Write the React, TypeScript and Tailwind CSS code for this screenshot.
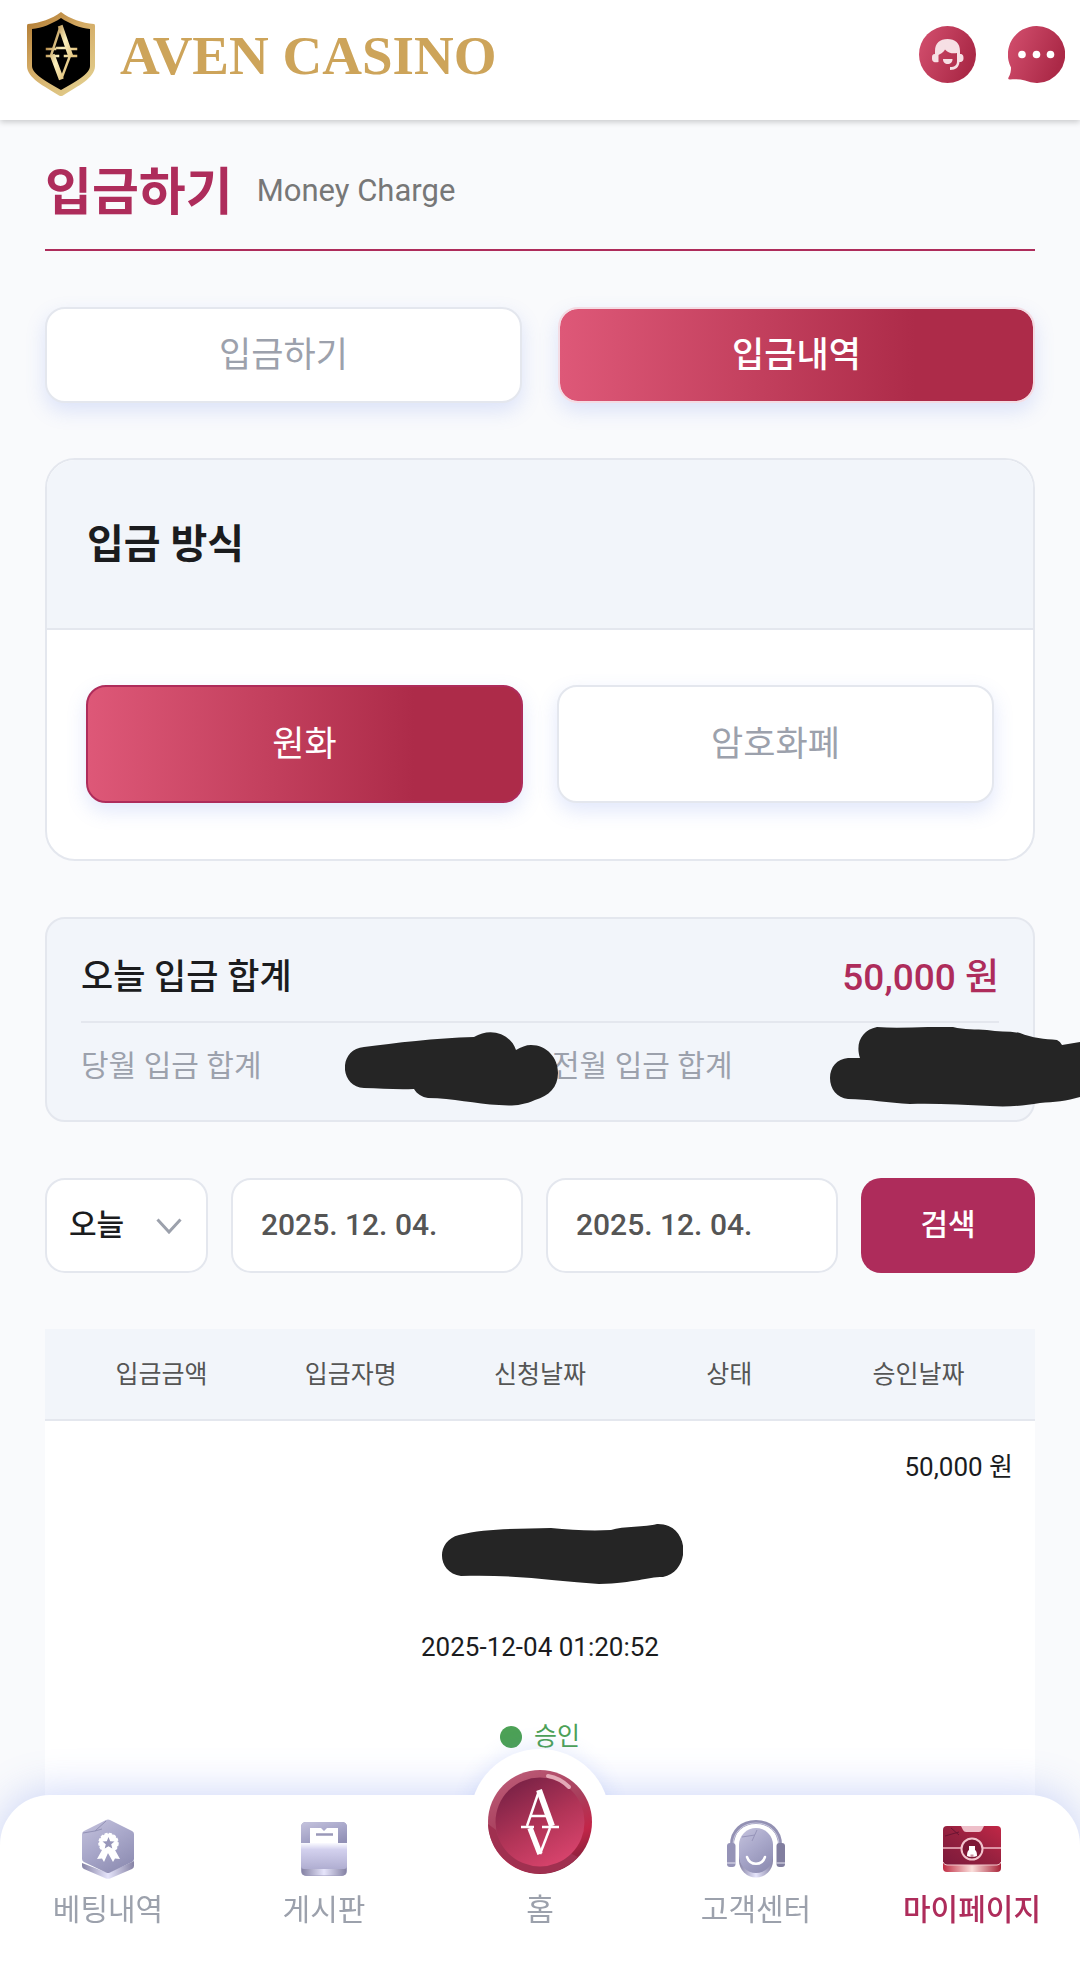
// Purpose: Deposit history page (mobile) with totals, date filter and bottom tab bar.
// Note: Amounts and the depositor name are blacked out with marker strokes.

import type { ReactNode } from 'react'

const historyColumns = ['입금금액', '입금자명', '신청날짜', '상태', '승인날짜']

function ShieldLogo() {
  return (
    <svg viewBox="0 0 70 86" className="h-[86px] w-[70px]" aria-hidden="true">
      <defs>
        <linearGradient id="gold" x1="0" y1="0" x2="0.7" y2="1">
          <stop offset="0" stopColor="#ad752c" />
          <stop offset="0.45" stopColor="#d2a862" />
          <stop offset="1" stopColor="#e2cd8c" />
        </linearGradient>
        <linearGradient id="letter" gradientUnits="userSpaceOnUse" x1="20" y1="30" x2="52" y2="44">
          <stop offset="0" stopColor="#a97a35" />
          <stop offset="0.5" stopColor="#fbf0bd" />
          <stop offset="1" stopColor="#dcb971" />
        </linearGradient>
      </defs>
      <path d="M35 1C44 8 56 12 68 13Q69 13 69 15V55C69 67 52 75 37 84.500Q35 85.500 33 84.500C18 75 1 67 1 55V15Q1 13 2 13C14 12 26 8 35 1Z" fill="url(#gold)" />
      <path d="M35 7C44 13 54 17 64 18V55C64 63 49 71 35 79C21 71 6 63 6 55V18C16 17 26 13 35 7Z" fill="#000" />
      <g stroke="url(#letter)" fill="none" strokeLinecap="square">
        <path d="M34 17L25.500 43" strokeWidth="2.500" />
        <path d="M35 17L44 43" strokeWidth="5" />
        <path d="M21 38H29M31 37H40M44 38H50M21 45H32M39 45H50" strokeWidth="2.500" />
        <path d="M27 46L34.500 66" strokeWidth="5" />
        <path d="M43.500 46L36 66" strokeWidth="2.500" />
      </g>
    </svg>
  )
}

function SupportIcon() {
  return (
    <svg viewBox="0 0 57 57" className="size-[57px]" aria-hidden="true">
      <defs>
        <linearGradient id="roundRed" x1="0" y1="0" x2="1" y2="0.4">
          <stop offset="0" stopColor="#d4506f" />
          <stop offset="1" stopColor="#ab2947" />
        </linearGradient>
      </defs>
      <circle cx="28.500" cy="28.500" r="28.500" fill="url(#roundRed)" />
      <path d="M16 28V25C16 17 21 13 28.500 13S41 17 41 25V28C44 28 44.500 30 44.500 32S44 36 40.500 36C40 41 37 44 31 44V41C36 41 38 39 38 35V27C34 28 29 27 26 23.500C24 27 21 28 19.500 29V36C14 37 13 35 13 32S13.500 28 16 28Z" fill="#f6dfe4" />
      <path d="M24 33H33.500C33.500 36.500 31.500 38 28.700 38S24 36.500 24 33Z" fill="#f6dfe4" />
    </svg>
  )
}

function ChatIcon() {
  return (
    <svg viewBox="0 0 57 57" className="size-[57px]" aria-hidden="true">
      <path d="M28.500 0A28.500 28.500 0 1 1 17 54.500C12 53 7 53 2 53.500Q-.5 53.500 .5 51.500C2.500 48 3 45 3 41.500A28.500 28.500 0 0 1 28.500 0Z" fill="url(#roundRed)" />
      <circle cx="14" cy="28.500" r="3.800" fill="#fff" />
      <circle cx="28.500" cy="28.500" r="3.800" fill="#fff" />
      <circle cx="42.500" cy="28.500" r="3.800" fill="#fff" />
    </svg>
  )
}

function BettingIcon() {
  return (
    <svg viewBox="0 0 52 60" className="h-[60px] w-[52px]" aria-hidden="true">
      <defs>
        <linearGradient id="lilac" x1="0" y1="0" x2="0.6" y2="1">
          <stop offset="0" stopColor="#c5c3dd" />
          <stop offset="0.5" stopColor="#aaa9cb" />
          <stop offset="1" stopColor="#9190b5" />
        </linearGradient>
        <linearGradient id="lilacRim">
          <stop offset="0" stopColor="#8683a5" />
          <stop offset="0.5" stopColor="#e6e5fb" />
          <stop offset="1" stopColor="#8683a5" />
        </linearGradient>
      </defs>
      <path d="M0 44V47Q0 49 2 50L24 59.500Q26 60 28 59.500L50 50Q52 49 52 47V42L26 54Z" fill="url(#lilacRim)" />
      <path d="M24 1Q26 0 28 1L50 12Q52 13 52 15V40Q52 42 50 43L28 53.500Q26 54.500 24 53.500L2 43Q0 42 0 40V15Q0 13 2 12Z" fill="url(#lilac)" />
      <path d="M1 14L13 12L24 2M13 12L20 10" stroke="#9291b5" strokeWidth="1" fill="none" />
      <path d="M20 31L15 40L20 39.500L22 43L26 34L31 43L33 39.500L38 40L33 31Z" fill="#fff" />
      <circle cx="26.500" cy="24" r="9.500" fill="#fff" stroke="#fff" strokeWidth="1.500" strokeDasharray="3 1.500" />
      <path d="M26.500 18L28.200 22.200L32.500 22.500L29.200 25.200L30.300 29.500L26.500 27.200L22.700 29.500L23.800 25.200L20.500 22.500L24.800 22.200Z" fill="#9796b9" />
    </svg>
  )
}

function BoardIcon() {
  return (
    <svg viewBox="0 0 46 54" className="h-[54px] w-[46px]" aria-hidden="true">
      <defs>
        <linearGradient id="folder" x1="0" y1="0" x2="0" y2="1">
          <stop offset="0" stopColor="#fafaff" />
          <stop offset="0.25" stopColor="#d3d1ee" />
          <stop offset="1" stopColor="#b0aed1" />
        </linearGradient>
      </defs>
      <rect width="46" height="54" rx="5" fill="#9c9abb" />
      <path d="M1 46H45V50Q45 53.500 41 53.500H5Q1 53.500 1 50Z" fill="url(#lilacRim)" />
      <path d="M0 5Q0 0 5 0H41Q46 0 46 5V24H0Z" fill="url(#lilac)" />
      <path d="M9 6H20L23 9L26 6H37V24H9Z" fill="#fff" />
      <path d="M15 12.500H32" stroke="#9a98b8" strokeWidth="2.500" />
      <path d="M0 21H46V44Q46 47 43 47H3Q0 47 0 44Z" fill="url(#folder)" />
    </svg>
  )
}

function CenterIcon() {
  return (
    <svg viewBox="0 0 58 58" className="size-[58px]" aria-hidden="true">
      <path d="M5 25C5 11 15 2 29 2S53 11 53 25" fill="none" stroke="#9391b3" strokeWidth="4" />
      <path d="M6 25C6 12 16 3 29 3S52 12 52 25" fill="none" stroke="#c9c8df" strokeWidth="1" />
      <rect x="12" y="12" width="34" height="45.500" rx="17" fill="url(#lilacRim)" />
      <rect x="12" y="8" width="34" height="45" rx="17" fill="url(#lilac)" />
      <path d="M15 17L28 15M25 21L30 10" stroke="#9795ba" strokeWidth="1" />
      <path d="M20 37C23 46 35 46 38 37" fill="none" stroke="#fff" strokeWidth="2.500" strokeLinecap="round" />
      <rect x="0" y="23" width="8.500" height="24" rx="3" fill="#9593b7" />
      <rect x="49.500" y="23" width="8.500" height="24" rx="3" fill="#817e9f" />
      <path d="M0 43H8.500M49.500 43H58" stroke="#e6e5f3" strokeWidth="1" />
    </svg>
  )
}

function MyPageIcon() {
  return (
    <svg viewBox="0 0 58 46" className="h-[46px] w-[58px]" aria-hidden="true">
      <defs>
        <linearGradient id="chest" x1="0" y1="1" x2="1" y2="0">
          <stop offset="0" stopColor="#7c1a3c" />
          <stop offset="0.5" stopColor="#96213f" />
          <stop offset="1" stopColor="#c12746" />
        </linearGradient>
        <linearGradient id="chestRim">
          <stop offset="0" stopColor="#c02c43" />
          <stop offset="0.5" stopColor="#fbe0dc" />
          <stop offset="1" stopColor="#a82036" />
        </linearGradient>
      </defs>
      <path d="M0 34H58V42Q58 46 54 46H4Q0 46 0 42Z" fill="url(#chestRim)" />
      <rect width="58" height="39" rx="4" fill="url(#chest)" />
      <path d="M0 36Q1 39 4 39H54Q57 39 58 36" fill="none" stroke="#f3c8cd" strokeWidth="1" />
      <path d="M18 0H41L39 4Q38 6 36 6H23Q21 6 20 4Z" fill="#eebfc9" />
      <path d="M2 10L16 6M8 2L16 9" stroke="#6b1533" strokeWidth="1" />
      <path d="M0 22H58" stroke="#f0b9c4" strokeWidth="1.500" />
      <circle cx="29" cy="23" r="10.500" fill="#7e1836" stroke="#f3c4cd" strokeWidth="2" />
      <path d="M26 20H32V24Q34 25 34 30Q29 32 24 30Q24 25 26 24Z" fill="#fff" />
      <path d="M27.500 31V28.500H30.500V31Z" fill="#c995a4" />
    </svg>
  )
}

function HomeCoin() {
  return (
    <svg viewBox="0 0 104 104" className="size-[104px]" aria-hidden="true">
      <defs>
        <linearGradient id="coinRim" x1="0.2" y1="0" x2="0.7" y2="1">
          <stop offset="0" stopColor="#bd5c78" />
          <stop offset="0.45" stopColor="#a8405d" />
          <stop offset="0.75" stopColor="#c22548" />
          <stop offset="1" stopColor="#7d2039" />
        </linearGradient>
        <linearGradient id="coinFace" x1="0.2" y1="0.1" x2="0.7" y2="1">
          <stop offset="0" stopColor="#7e2347" />
          <stop offset="0.5" stopColor="#b13457" />
          <stop offset="1" stopColor="#d9446d" />
        </linearGradient>
      </defs>
      <circle cx="52" cy="52" r="52" fill="url(#coinRim)" />
      <path d="M0 54A52 52 0 0 0 90 87L80 82A44 44 0 0 1 8 60Z" fill="#a03050" />
      <circle cx="52" cy="52" r="44.500" fill="url(#coinFace)" />
      <path d="M60 6Q72 8 81 17" stroke="#e4a9b7" strokeWidth="4" strokeLinecap="round" fill="none" />
      <g stroke="#fff" fill="none">
        <path d="M51 21L39 56" strokeWidth="2.500" />
        <path d="M51 20L64 56" strokeWidth="6" />
        <path d="M43 46H59M33 57H46M54 57H71" strokeWidth="2.500" />
        <path d="M42 58L52 84" strokeWidth="5.500" />
        <path d="M62 58L52 84" strokeWidth="2.500" />
      </g>
    </svg>
  )
}

const navItems = [
  { label: '베팅내역', icon: <BettingIcon /> },
  { label: '게시판', icon: <BoardIcon /> },
  { label: '홈', icon: <HomeCoin />, home: true },
  { label: '고객센터', icon: <CenterIcon /> },
  { label: '마이페이지', icon: <MyPageIcon />, active: true },
]

function TabButton({ active, className, children }: { active?: boolean; className: string; children: ReactNode }) {
  const look = active
    ? 'bg-linear-to-r from-[#de5878] to-[#ad2b49] to-75% text-white'
    : 'bg-white text-[#9ca1ac]'
  return (
    <button type="button" className={`flex-1 rounded-[20px] border-2 pt-0.5 text-[35px] leading-[48px] shadow-[0_8px_20px_rgba(88,120,235,0.18)] ${look} ${className}`}>
      {children}
    </button>
  )
}

function DateField({ label }: { label: string }) {
  return (
    <input
      type="text"
      aria-label={label}
      defaultValue="2025. 12. 04."
      className="h-[95px] min-w-0 flex-1 rounded-[20px] border-2 border-[#e4e7ee] bg-white px-7 pb-0.5 text-[30px] font-medium text-[#555]"
    />
  )
}

export default function App() {
  return (
    <div className="flex min-h-screen flex-col overflow-x-hidden bg-[#f9fafc] font-['Roboto','Noto_Sans_CJK_KR',sans-serif] text-[#1b1c1e]">
      <header className="relative flex h-[120px] items-center justify-between bg-white pr-[15px] pb-3 pl-[26px] shadow-[0_2px_6px_rgba(0,0,0,0.2)]">
        <a href="#home" className="flex items-center gap-6">
          <ShieldLogo />
          <span className="pt-1 font-['Liberation_Serif',serif] text-[55px] leading-[64px] font-bold text-[#cda45a]">AVEN CASINO</span>
        </a>
        <div className="flex gap-8">
          <button type="button" aria-label="고객센터"><SupportIcon /></button>
          <button type="button" aria-label="메시지"><ChatIcon /></button>
        </div>
      </header>

      <main className="flex flex-1 flex-col px-[45px]">
        <div className="flex h-[131px] items-center gap-6 border-b-2 border-[#ae2c5b] pt-4">
          <h1 className="text-[51px] leading-[60px] font-bold text-[#ae2c5b]">입금하기</h1>
          <p className="pb-1 text-[31px] leading-[40px] text-[#777]">Money Charge</p>
        </div>

        <div className="mt-14 flex gap-9">
          <TabButton className="h-24 border-[#e4e7ee]">입금하기</TabButton>
          <TabButton active className="h-24 border-[#f3dce4] bg-clip-padding font-medium">입금내역</TabButton>
        </div>

        <section className="mt-[55px] overflow-hidden rounded-[30px] border-2 border-[#e4e7ee] bg-white">
          <h2 className="flex h-[170px] items-center border-b-2 border-[#e4e7ee] bg-[#f2f5fa] px-10 pt-0.5 text-[40px] leading-[48px] font-bold">입금 방식</h2>
          <div className="flex gap-[34px] px-[39px] pt-[55px] pb-14">
            <TabButton active className="h-[118px] border-[#ae2c5b] bg-origin-border">원화</TabButton>
            <TabButton className="h-[118px] border-[#e4e7ee]">암호화폐</TabButton>
          </div>
        </section>

        <section className="mt-14 h-[205px] rounded-[20px] border-2 border-[#e4e7ee] bg-[#f2f5fa] px-[34px] pt-9">
          <div className="flex items-center justify-between border-b-2 border-[#e4e7ee] pb-5 text-[35px] leading-[46px] font-medium">
            <span>오늘 입금 합계</span>
            <span className="text-[37px] text-[#ae2c5b]">50,000 원</span>
          </div>
          <div className="relative grid grid-cols-2 gap-6 pt-[21px] text-[30px] leading-[44px] text-[#9ca1ac]">
            <span>당월 입금 합계</span>
            <span>전월 입금 합계</span>
            <svg viewBox="0 0 216 76" className="absolute top-2 left-[264px] h-[76px] w-[216px]" aria-hidden="true">
              <path d="M19 16C50 12 90 7 129 6C145-4 165 2 171 19C176 16 181 14 186 14C202 14 213 27 213 42C213 56 204 65 190 69C177 75 165 75 154 74C130 73 108 67 83 67C77 66 72 63 69 58C50 59 36 57 19 57C-6 56-7 18 19 16Z" fill="#252525" />
            </svg>
            <svg viewBox="0 0 250 82" className="absolute top-1 left-[749px] h-[82px] w-[250px]" aria-hidden="true">
              <path d="M47 0C72 2 98-1 123 0C134 3 146 2 157 3C168 5 180 4 190 6C202 11 215 12 227 13Q231 15 232 18L250 15V70C237 74 224 75 210 76C193 79 177 80 160 79C133 78 105 76 80 77C59 76 38 72 18 72C7 71 0 62 0 51C0 40 7 32 18 31Q25 31 30 31C25 16 32 3 47 0Z" fill="#252525" />
            </svg>
          </div>
        </section>

        <form className="mt-14 flex gap-[23px]">
          <div className="relative">
            <select aria-label="기간" className="h-[95px] w-[163px] appearance-none rounded-[20px] border-2 border-[#e4e7ee] bg-white pb-0.5 pl-[22px] text-[30px] font-medium">
              <option>오늘</option>
            </select>
            <svg viewBox="0 0 26 16" className="pointer-events-none absolute top-10 right-[26px] h-4 w-[26px]" aria-hidden="true">
              <path d="M1.500 1.500L13 14L24.500 1.500" fill="none" stroke="#9ca1ac" strokeWidth="3" />
            </svg>
          </div>
          <DateField label="시작일" />
          <DateField label="종료일" />
          <button type="submit" className="h-[95px] w-[174px] rounded-[20px] bg-[#ae2c5b] pb-0.5 text-[30px] font-medium text-white">검색</button>
        </form>

        <div className="mt-14 flex-1 bg-white">
          <table className="block text-[25px] leading-[36px]">
            <thead className="block border-b-2 border-[#e4e7ee] bg-[#f2f5fa] px-[22px]">
              <tr className="flex h-[90px] items-center pt-0.5">
                {historyColumns.map((name) => (
                  <th key={name} className="flex-1 font-normal text-[#555]">{name}</th>
                ))}
              </tr>
            </thead>
            <tbody className="block px-[22px]">
              <tr className="flex flex-col">
                <td className="flex h-[90px] items-center justify-end pt-0.5 text-[26px]">50,000 원</td>
                <td className="flex h-[90px] items-center justify-center pb-1 pl-11">
                  <svg viewBox="0 0 242 62" className="h-[62px] w-[242px]" aria-hidden="true">
                    <path d="M18 12C45 5 80 6 110 5C130 7 150 8 170 7C182 3 205 4 216 1C249 0 251 48 222 54C205 54 195 60 158 61C115 58 70 51 20 53C-4 50-6 18 18 12Z" fill="#252525" />
                  </svg>
                </td>
                <td className="flex h-[90px] items-center justify-center pt-0.5 text-[26px]">2025-12-04 01:20:52</td>
                <td className="flex h-[90px] items-center justify-center gap-3 pt-0.5 text-[#4ca156]">
                  <span className="size-[22px] rounded-full bg-[#4ca156]" />
                  승인
                </td>
              </tr>
            </tbody>
          </table>
        </div>
      </main>

      <nav className="fixed inset-x-0 bottom-0 flex h-[175px] rounded-t-[50px] bg-white shadow-[0_-4px_40px_rgba(88,120,235,0.28)]">
        {navItems.map(({ label, icon, home, active }) => (
          <a key={label} href="#menu" className={`relative flex flex-1 flex-col items-center text-[30px] leading-[40px] ${active ? 'font-medium text-[#ae2c5b]' : 'text-[#9ca1ac]'}`}>
            {home && (
              <span className="absolute -top-[46px] size-[140px] rounded-full bg-white shadow-[0_-4px_20px_rgba(88,120,235,0.14)]" />
            )}
            {home && <span className="absolute inset-x-0 top-0 h-[175px] bg-white" />}
            <span className={home ? 'relative -mt-[25px] h-[120px]' : 'relative flex h-[95px] items-center pt-5 pb-2'}>{icon}</span>
            <span className="relative">{label}</span>
          </a>
        ))}
      </nav>
    </div>
  )
}
